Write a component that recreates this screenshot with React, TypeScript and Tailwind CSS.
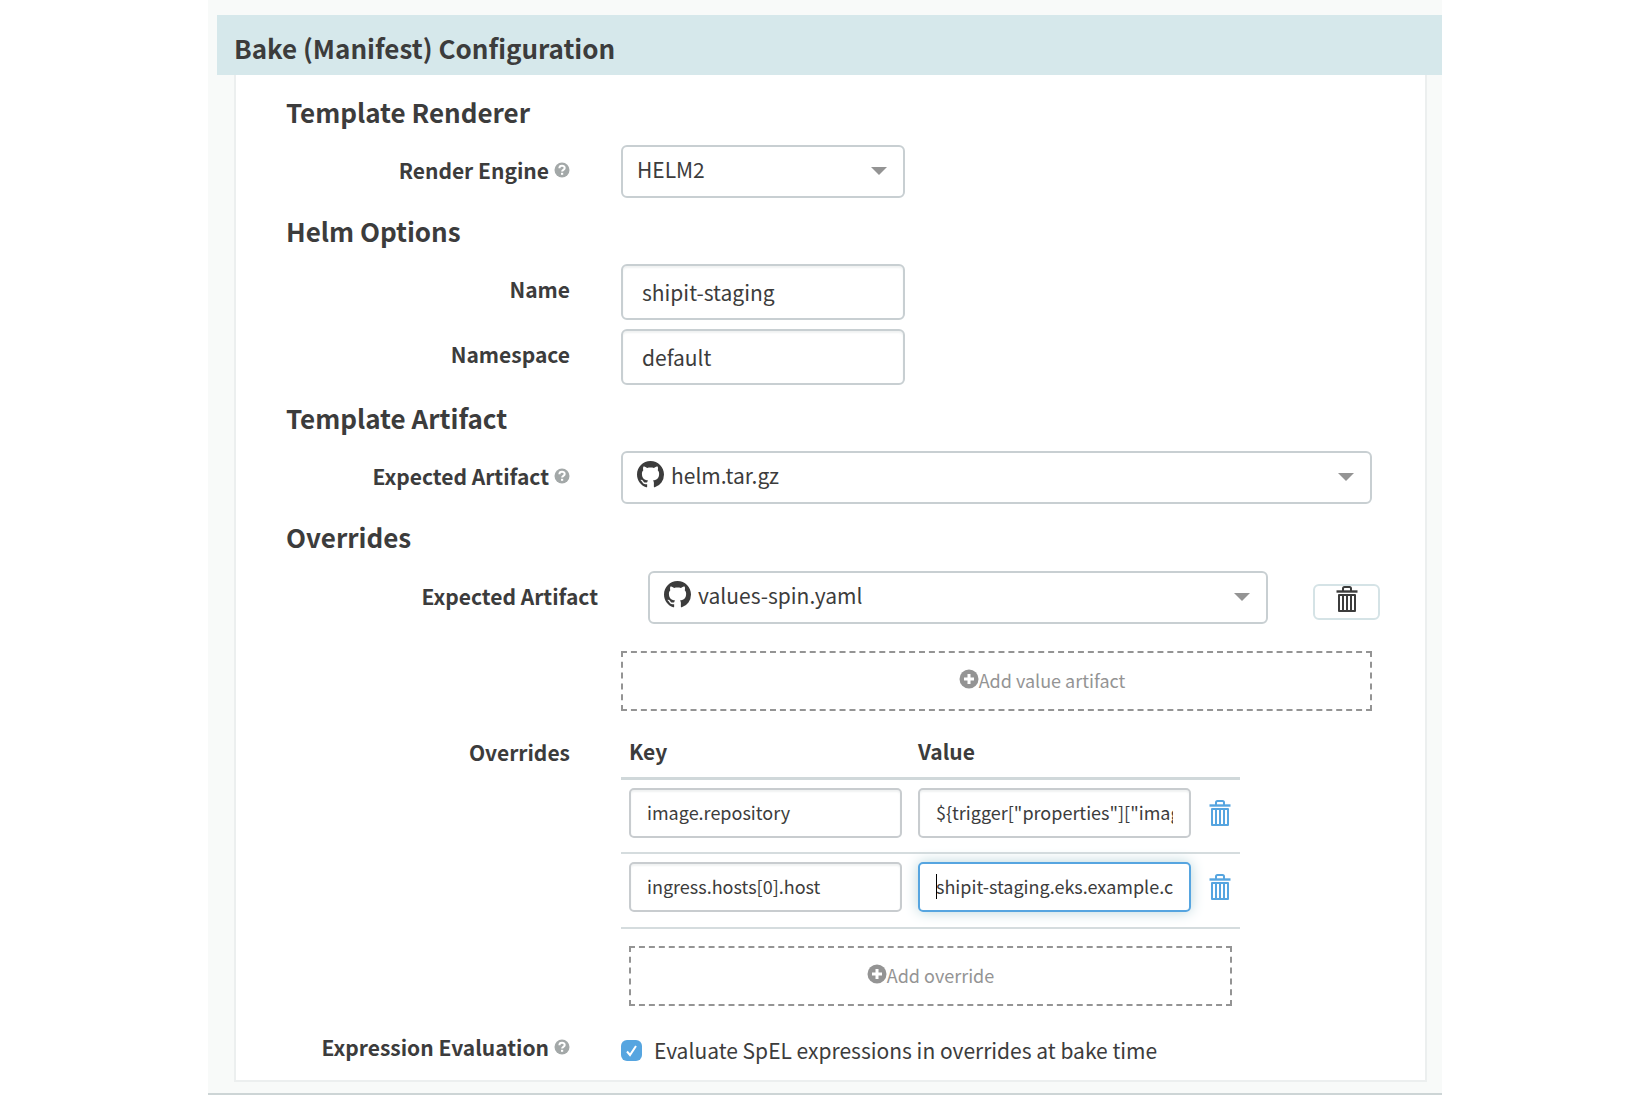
import type { ReactNode } from "react";

function HelpIcon() {
  return (
    <svg viewBox="0 0 16 16" className="size-4 shrink-0" aria-hidden="true">
      <circle cx="8" cy="8" r="7.5" fill="#a3a8a8" />
      <path d="M5.4 6.2C5.4 2.9 10.7 3 10.7 6.1 10.7 8 8.1 7.900 8.100 9.600" fill="none" stroke="#fff" strokeWidth="2" />
      <rect x="7" y="10.800" width="2.200" height="2" fill="#fff" />
    </svg>
  );
}

function GithubIcon() {
  return (
    <svg viewBox="0 0 16 16" className="size-[27px]" fill="#3c3c3c" aria-hidden="true">
      <path d="M8 0C3.580 0 0 3.580 0 8c0 3.540 2.290 6.530 5.470 7.590.4.070.55-.17.55-.38 0-.19-.01-.82-.01-1.490-2.010.37-2.530-.49-2.690-.94-.09-.23-.48-.94-.82-1.130-.28-.15-.68-.52-.01-.53.63-.01 1.080.58 1.230.82.72 1.210 1.870.87 2.330.66.07-.52.28-.87.51-1.070-1.780-.2-3.640-.89-3.640-3.950 0-.87.31-1.590.82-2.150-.08-.2-.36-1.020.08-2.120 0 0 .67-.21 2.200.82.64-.18 1.320-.27 2-.27s1.360.09 2 .27c1.530-1.040 2.200-.82 2.200-.82.44 1.100.16 1.920.08 2.120.51.56.82 1.270.82 2.150 0 3.070-1.870 3.750-3.650 3.950.29.25.54.73.54 1.480 0 1.070-.01 1.930-.01 2.200 0 .21.15.46.55.38A8.010 8.010 0 0 0 16 8c0-4.420-3.580-8-8-8z" />
    </svg>
  );
}

function TrashIcon() {
  return (
    <svg viewBox="0 0 22 26" className="h-[26px] w-[22px]" fill="none" stroke="currentColor" aria-hidden="true">
      <path d="M7 5V2.500Q7 1 8.500 1H13.500Q15 1 15 2.500V5" strokeWidth="2" />
      <path d="M0.500 5.500H21.500" strokeWidth="2.400" />
      <path d="M3 9H19V25H3Z" strokeWidth="2" strokeLinejoin="round" />
      <path d="M7 9V24M11 9V24M15 9V24" strokeWidth="2" />
    </svg>
  );
}

function PlusIcon() {
  return (
    <svg viewBox="0 0 20 20" className="mb-0.5 size-5 shrink-0" aria-hidden="true">
      <circle cx="10" cy="10" r="9.500" fill="#949494" />
      <path d="M10 5V15M5 10H15" stroke="#fff" strokeWidth="3" />
    </svg>
  );
}

function SelectBox({ id, value, icon }: { id: string; value: string; icon?: boolean }) {
  return (
    <div className="relative w-full">
      <select
        id={id}
        defaultValue={value}
        className={
          icon
            ? "block h-[53px] w-full appearance-none rounded-md border-2 border-[#c8cfd2] bg-white pr-12 pb-1 pl-12 text-[21px]"
            : "block h-[53px] w-full appearance-none rounded-md border-2 border-[#c8cfd2] bg-white pr-12 pb-1 pl-3.5 text-[21px]"
        }
      >
        <option>{value}</option>
      </select>
      {icon && (
        <span className="pointer-events-none absolute top-2.5 left-4">
          <GithubIcon />
        </span>
      )}
      <svg viewBox="0 0 16 8" className="pointer-events-none absolute top-[22px] right-[18px] h-2 w-4" aria-hidden="true">
        <path d="M0 0H16L8 8Z" fill="#949494" />
      </svg>
    </div>
  );
}

function Section({ title, children }: { title: string; children: ReactNode }) {
  return (
    <section className="pt-[15px]">
      <h3 className="mb-[15px] text-[26px] leading-9 font-bold">{title}</h3>
      {children}
    </section>
  );
}

function Row({ label, htmlFor, help, children }: { label: string; htmlFor?: string; help?: boolean; children: ReactNode }) {
  return (
    <div className="grid grid-cols-[284px_minmax(0,1fr)] gap-[51px]">
      <div className="flex items-center gap-[5px] justify-self-end self-start pt-[9px] leading-8 font-bold">
        <label htmlFor={htmlFor}>{label}</label>
        {help && <HelpIcon />}
      </div>
      {children}
    </div>
  );
}

function TextBox({ id, value }: { id: string; value: string }) {
  return (
    <input
      id={id}
      defaultValue={value}
      className="h-14 w-[284px] rounded-md border-2 border-[#c8cfd2] px-[19px] text-[21px] shadow-[inset_0_2px_2px_#f0f2f2]"
    />
  );
}

function AddButton({ children }: { children: ReactNode }) {
  return (
    <button type="button" className="flex h-[60px] w-full items-center justify-center border-2 border-dashed border-[#949494] pb-0.5 text-[18px] text-[#949494]">
      {children}
    </button>
  );
}

const overrides = [
  { key: "image.repository", value: '${trigger["properties"]["image"]}', focused: false },
  { key: "ingress.hosts[0].host", value: "shipit-staging.eks.example.com", focused: true },
];

function OverridesTable() {
  return (
    <div className="w-[619px]">
      <table className="w-full table-fixed border-collapse">
        <colgroup>
          <col className="w-[289px]" />
          <col className="w-[289px]" />
          <col />
        </colgroup>
        <thead>
          <tr className="h-[51px] border-b-3 border-[#d0d8da] text-left">
            <th className="px-2">Key</th>
            <th className="px-2">Value</th>
            <td />
          </tr>
        </thead>
        <tbody>
          {overrides.map((row) => (
            <tr key={row.key} className="h-[75px] border-b-2 border-[#d5dcde] align-top">
              <td className="px-2 pt-2">
                <input
                  aria-label="Key"
                  defaultValue={row.key}
                  className="block h-[50px] w-full rounded-[5px] border-2 border-[#c8cccf] px-4 pb-0.5 text-[18px] shadow-[inset_0_2px_2px_#f0f2f2]"
                />
              </td>
              <td className="relative px-2 pt-2">
                <input
                  aria-label="Value"
                  defaultValue={row.value}
                  className={
                    row.focused
                      ? "block h-[50px] w-full rounded-[5px] border-2 border-[#56a5e0] px-4 pb-0.5 text-[18px] shadow-[0_0_14px_#b9d5da]"
                      : "block h-[50px] w-full rounded-[5px] border-2 border-[#c8cccf] px-4 pb-0.5 text-[18px] shadow-[inset_0_2px_2px_#f0f2f2]"
                  }
                />
                {row.focused && <span className="absolute top-5 left-[26px] h-[25px] w-px bg-black" />}
              </td>
              <td className="pt-5 pl-2.5">
                <button type="button" aria-label="Remove override" className="block text-[#56a5e0]">
                  <TrashIcon />
                </button>
              </td>
            </tr>
          ))}
        </tbody>
      </table>
      <div className="px-2 pt-[17px]">
        <AddButton>
          <PlusIcon />
          Add override
        </AddButton>
      </div>
    </div>
  );
}

export default function App() {
  return (
    <main className="min-h-screen bg-white px-52 font-['Noto_Sans_CJK_SC','Noto_Sans',sans-serif] text-[21px] text-[#3c3c3c]">
      <div className="border-b-2 border-[#cdd5d6] bg-[#f8faf9] pt-[15px] pb-[11px]">
        <h2 className="ml-[9px] bg-[#d6e8eb] px-[17px] pt-[15px] pb-[9px] text-[26px] leading-9 font-bold">Bake (Manifest) Configuration</h2>
        <form className="mr-[15px] ml-[26px] border-2 border-t-0 border-[#ecefef] bg-white pt-1 pr-[53px] pb-2.5 pl-[50px]">
          <Section title="Template Renderer">
            <Row label="Render Engine" htmlFor="engine" help>
              <div className="w-[284px]">
                <SelectBox id="engine" value="HELM2" />
              </div>
            </Row>
          </Section>
          <Section title="Helm Options">
            <div className="flex flex-col gap-[9px]">
              <Row label="Name" htmlFor="name">
                <TextBox id="name" value="shipit-staging" />
              </Row>
              <Row label="Namespace" htmlFor="namespace">
                <TextBox id="namespace" value="default" />
              </Row>
            </div>
          </Section>
          <Section title="Template Artifact">
            <Row label="Expected Artifact" htmlFor="template" help>
              <SelectBox id="template" value="helm.tar.gz" icon />
            </Row>
          </Section>
          <Section title="Overrides">
            <div className="-mr-2 flex pt-px">
              <label htmlFor="values" className="w-[312px] shrink-0 pt-[9px] text-right leading-8 font-bold">
                Expected Artifact
              </label>
              <div className="ml-[50px] min-w-0 grow">
                <SelectBox id="values" value="values-spin.yaml" icon />
              </div>
              <button
                type="button"
                aria-label="Remove artifact"
                className="mt-[13px] ml-[45px] flex h-9 w-[67px] shrink-0 justify-center rounded-md border-2 border-[#d5e3e6]"
              >
                <TrashIcon />
              </button>
            </div>
            <div className="mt-[27px] ml-[335px]">
              <AddButton>
                <span className="flex items-center pl-[91px]">
                  <PlusIcon />
                  Add value artifact
                </span>
              </AddButton>
            </div>
            <div className="mt-4">
              <Row label="Overrides">
                <OverridesTable />
              </Row>
            </div>
          </Section>
          <div className="mt-4">
            <Row label="Expression Evaluation" htmlFor="spel" help>
              <label className="mt-2 flex items-center gap-3 leading-10">
                <span className="relative flex">
                  <input id="spel" type="checkbox" defaultChecked className="size-[21px] appearance-none rounded-md bg-[#56a5e0]" />
                  <svg viewBox="0 0 21 21" className="pointer-events-none absolute inset-0 size-[21px]" aria-hidden="true">
                    <path d="M6 11.500L9 15L15 6" fill="none" stroke="#fff" strokeWidth="2" />
                  </svg>
                </span>
                Evaluate SpEL expressions in overrides at bake time
              </label>
            </Row>
          </div>
        </form>
      </div>
    </main>
  );
}
